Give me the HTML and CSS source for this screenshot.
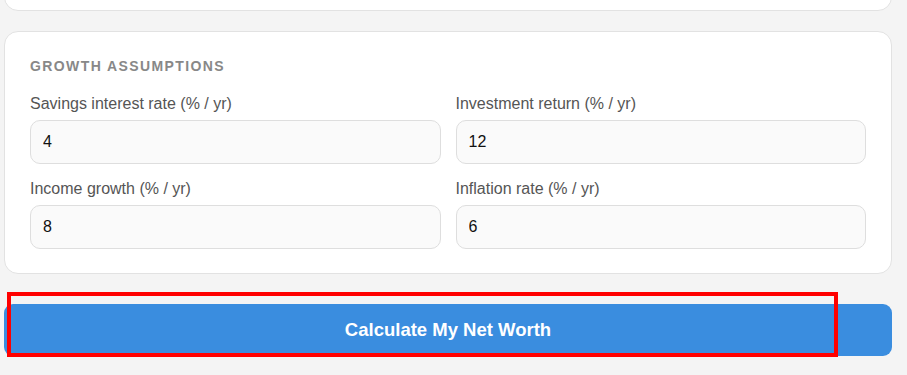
FILE: index.html
```html
<!DOCTYPE html>
<html lang="en">
<head>
<meta charset="utf-8">
<title>Net Worth Calculator</title>
<link rel="stylesheet" href="styles.css">
</head>
<body>
<div class="page">
  <section class="card card-prev"></section>
  <section class="card">
    <h3 class="card-title">GROWTH ASSUMPTIONS</h3>
    <div class="grid">
      <div class="field">
        <label class="label">Savings interest rate (% / yr)</label>
        <input class="input" type="text" value="4">
      </div>
      <div class="field">
        <label class="label">Investment return (% / yr)</label>
        <input class="input" type="text" value="12">
      </div>
      <div class="field">
        <label class="label">Income growth (% / yr)</label>
        <input class="input" type="text" value="8">
      </div>
      <div class="field">
        <label class="label">Inflation rate (% / yr)</label>
        <input class="input" type="text" value="6">
      </div>
    </div>
  </section>
  <button class="btn" type="button">Calculate My Net Worth</button>
</div>
<div class="highlight"></div>
</body>
</html>
```

FILE: styles.css
```css
* { box-sizing: border-box; }
html, body {
  margin: 0;
  padding: 0;
  background: #f4f4f4;
  font-family: "Liberation Sans", Arial, sans-serif;
  overflow: hidden;
}
.page {
  width: 888px;
  margin-left: 4px;
  display: flex;
  flex-direction: column;
}
.card {
  background: #fff;
  border: 1px solid #e2e2e2;
  border-radius: 14px;
  padding: 26px 25px 24px;
}
.card-prev {
  height: 40px;
  padding: 0;
  margin-top: -29px;
  margin-bottom: 20px;
}
.card-title {
  margin: 0 0 19px;
  font-size: 14px;
  line-height: 17px;
  font-weight: bold;
  letter-spacing: 1.4px;
  color: #888;
}
.grid {
  display: grid;
  grid-template-columns: 1fr 1fr;
  column-gap: 15px;
  row-gap: 15px;
}
.field {
  display: flex;
  flex-direction: column;
}
.label {
  font-size: 16px;
  line-height: 19px;
  color: #555;
  margin-bottom: 7px;
}
.input {
  height: 44px;
  padding: 0 12px;
  border: 1px solid #dedede;
  border-radius: 10px;
  background: #fafafa;
  font-family: "Liberation Sans", Arial, sans-serif;
  font-size: 16px;
  color: #111;
  outline: none;
}
.btn {
  margin-top: 30px;
  height: 52px;
  border: none;
  border-radius: 9px;
  background: #3a8ddf;
  color: #fff;
  font-family: "Liberation Sans", Arial, sans-serif;
  font-size: 18.5px;
  font-weight: bold;
}
.highlight {
  position: absolute;
  left: 7px;
  top: 292px;
  width: 831px;
  height: 65px;
  border: 4px solid #ff0000;
  pointer-events: none;
}
```
